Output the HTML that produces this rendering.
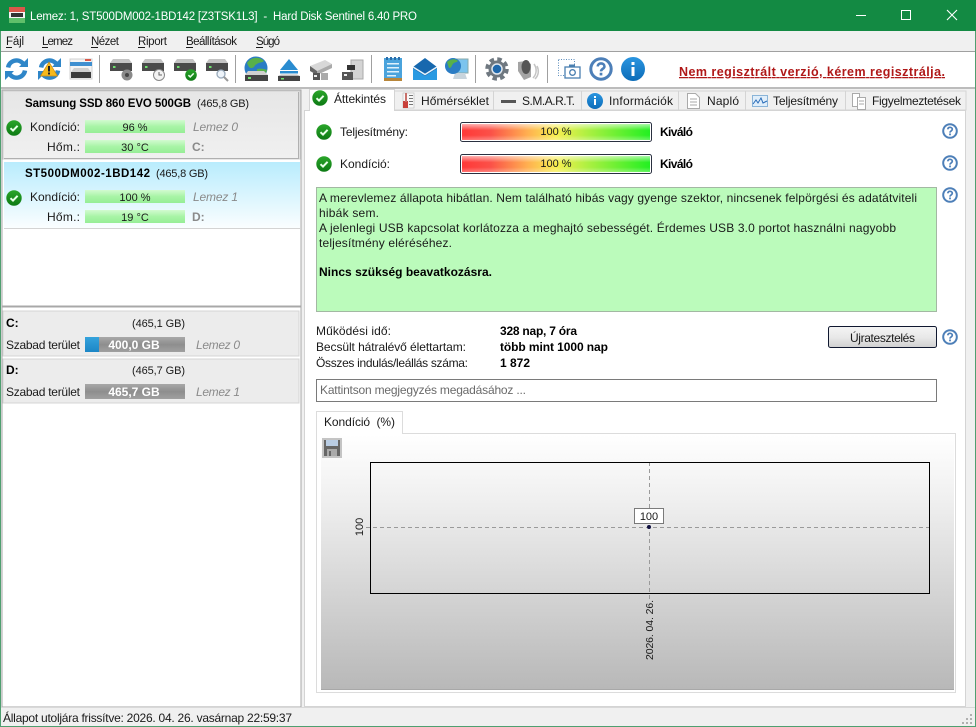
<!DOCTYPE html>
<html><head><meta charset="utf-8"><style>
html,body{margin:0;padding:0;background:#f0f0f0}
svg{display:block}
text{font-family:"Liberation Sans",sans-serif;font-size:12px;fill:#1a1a1a;white-space:pre}
.b{font-weight:700;fill:#000}
.i{font-style:italic;fill:#8a8a8a}
.g{fill:#8a8a8a;font-weight:700}
.w{fill:#fff}
.s{font-size:11px}
.m{font-size:11.5px}
</style></head><body>
<svg width="976" height="727" viewBox="0 0 976 727" xmlns="http://www.w3.org/2000/svg">
<defs>
<linearGradient id="cg" x1="0" y1="0" x2="0" y2="1"><stop offset="0" stop-color="#e6e6e6"/><stop offset="1" stop-color="#f0f0f0"/></linearGradient>
<linearGradient id="cb" x1="0" y1="0" x2="0" y2="1"><stop offset="0" stop-color="#b8ecfd"/><stop offset="1" stop-color="#fbfeff"/></linearGradient>
<linearGradient id="gb" x1="0" y1="0" x2="0" y2="1"><stop offset="0" stop-color="#d2fbd0"/><stop offset=".5" stop-color="#a8f4a6"/><stop offset="1" stop-color="#96ee96"/></linearGradient>
<linearGradient id="gr" x1="0" y1="0" x2="0" y2="1"><stop offset="0" stop-color="#a8a8a8"/><stop offset=".5" stop-color="#8e8e8e"/><stop offset="1" stop-color="#a0a0a0"/></linearGradient>
<linearGradient id="bl" x1="0" y1="0" x2="0" y2="1"><stop offset="0" stop-color="#35a3dc"/><stop offset="1" stop-color="#1c86c6"/></linearGradient>
<linearGradient id="rg" x1="0" y1="0" x2="1" y2="0"><stop offset="0" stop-color="#ff3838"/><stop offset=".15" stop-color="#fb5048"/><stop offset=".35" stop-color="#ffb050"/><stop offset=".5" stop-color="#f8ee50"/><stop offset=".68" stop-color="#a8f040"/><stop offset="1" stop-color="#22f022"/></linearGradient>
<linearGradient id="sh" x1="0" y1="0" x2="0" y2="1"><stop offset="0" stop-color="#fff" stop-opacity=".6"/><stop offset=".4" stop-color="#fff" stop-opacity="0"/><stop offset=".7" stop-color="#fff" stop-opacity="0"/><stop offset="1" stop-color="#fff" stop-opacity=".3"/></linearGradient>
<linearGradient id="btn" x1="0" y1="0" x2="0" y2="1"><stop offset="0" stop-color="#f4f4f4"/><stop offset=".5" stop-color="#e9e9e9"/><stop offset="1" stop-color="#d0d0d0"/></linearGradient>
<linearGradient id="ch" x1="0" y1="0" x2="0" y2="1"><stop offset="0" stop-color="#fff"/><stop offset=".25" stop-color="#f0f0f0"/><stop offset="1" stop-color="#b8b8b8"/></linearGradient>
<linearGradient id="chk" x1="0" y1="0" x2="0" y2="1"><stop offset="0" stop-color="#2aa52a"/><stop offset="1" stop-color="#0d7a14"/></linearGradient>
<linearGradient id="inf" x1="0" y1="0" x2="0" y2="1"><stop offset="0" stop-color="#2a95e0"/><stop offset="1" stop-color="#0c6cb8"/></linearGradient>
<symbol id="ck" viewBox="0 0 16 16" overflow="visible"><circle cx="8" cy="8" r="7.7" fill="url(#chk)"/><path d="M4.5 8.2 7 10.6 11.6 5.8" fill="none" stroke="#e8ffe8" stroke-width="2"/></symbol>
<symbol id="hp" viewBox="0 0 16 16"><circle cx="8" cy="8" r="6.800" fill="#fff" stroke="#4d7fb8" stroke-width="2"/><path d="M5.800 6.300C5.900 4.900 6.900 4.300 8 4.300c1.300 0 2.300.8 2.300 2 0 1.600-2.300 1.600-2.300 3.300" fill="none" stroke="#4d7fb8" stroke-width="1.700"/><rect x="7.100" y="10.500" width="1.800" height="1.800" fill="#4d7fb8"/></symbol>
<symbol id="hd" viewBox="0 0 22 12"><path d="M3 0H19L22 4H0Z" fill="#c4c4c4"/><rect x="0" y="4" width="22" height="8" fill="#4a4a4a"/><rect x="3" y="7" width="2.500" height="2" fill="#6fe06f"/></symbol>
</defs>

<rect width="976" height="727" fill="#f0f0f0"/>
<!-- title bar -->
<rect width="976" height="31" fill="#138a43"/>
<rect x="9" y="7" width="16" height="16" fill="#f4f4f4"/><rect x="9" y="7" width="16" height="5" fill="#d9584a"/><rect x="9" y="18" width="16" height="5" fill="#5fbf6a"/><rect x="11" y="13" width="12" height="4" fill="#333"/>
<text x="30" y="20" class="w m" textLength="387">Lemez: 1, ST500DM002-1BD142 [Z3TSK1L3]  -  Hard Disk Sentinel 6.40 PRO</text>
<rect x="856" y="15" width="10" height="1" fill="#fff"/>
<rect x="901.500" y="10.500" width="9" height="9" fill="none" stroke="#fff"/>
<path d="M947 10 957 20M957 10 947 20" stroke="#fff" stroke-width="1.100"/>
<!-- menu -->
<rect y="31" width="976" height="20" fill="#f0f0f0"/>
<text x="6" y="45" class="m" textLength="18">Fájl</text><rect x="6" y="47" width="6" height="1" fill="#1a1a1a"/>
<text x="42" y="45" class="m" textLength="31">Lemez</text><rect x="42" y="47" width="6" height="1" fill="#1a1a1a"/>
<text x="91" y="45" class="m" textLength="28">Nézet</text><rect x="91" y="47" width="7" height="1" fill="#1a1a1a"/>
<text x="138" y="45" class="m" textLength="29">Riport</text><rect x="138" y="47" width="7" height="1" fill="#1a1a1a"/>
<text x="186" y="45" class="m" textLength="51">Beállítások</text><rect x="186" y="47" width="7" height="1" fill="#1a1a1a"/>
<text x="256" y="45" class="m" textLength="24">Súgó</text><rect x="256" y="47" width="7" height="1" fill="#1a1a1a"/>
<rect y="51" width="976" height="1" fill="#a0a0a0"/>
<!-- toolbar -->
<rect y="52" width="976" height="35" fill="#fff"/>
<rect y="87" width="976" height="2" fill="#bcbcbc"/>
<g fill="#a0a0a0"><rect x="99" y="55" width="1" height="28"/><rect x="235" y="55" width="1" height="28"/><rect x="371" y="55" width="1" height="28"/><rect x="475" y="55" width="1" height="28"/><rect x="547" y="55" width="1" height="28"/></g>
<!-- refresh -->
<g id="rf"><path d="M8.100 67.500A8.500 8.500 0 0 1 23 63.500M25 70.500A8.500 8.500 0 0 1 10 74.500" fill="none" stroke="#2f86c8" stroke-width="4.500"/><path d="M28 58V67H19ZM5 80V71H14Z" fill="#2f86c8"/></g>
<g transform="translate(33 0)"><path d="M8.100 67.500A8.500 8.500 0 0 1 23 63.500M25 70.500A8.500 8.500 0 0 1 10 74.500" fill="none" stroke="#2f86c8" stroke-width="4.500"/><path d="M28 58V67H19ZM5 80V71H14Z" fill="#2f86c8"/></g>
<path d="M49 62 57.500 76H40.500Z" fill="#f6b91c" stroke="#c88a10" stroke-width=".7"/><rect x="48" y="66" width="2" height="5.500" fill="#222"/><rect x="48" y="72.500" width="2" height="2" fill="#222"/>
<!-- disk list -->
<rect x="70" y="59" width="22" height="20" fill="#f4f4f4" stroke="#d0d0d0"/><rect x="70" y="62" width="22" height="4" fill="#3f8fd0"/><rect x="85" y="59" width="6" height="2" fill="#d9584a"/><path d="M74 68H88L91 72H71Z" fill="#d0d0d0"/><rect x="71" y="72" width="20" height="6" fill="#3c3c3c"/>
<!-- hdds -->
<use href="#hd" x="110" y="59" width="22" height="12"/>
<circle cx="127" cy="75" r="5.500" fill="#8a8a8a"/><circle cx="127" cy="75" r="2" fill="#444"/>
<use href="#hd" x="142" y="59" width="22" height="12"/>
<circle cx="159" cy="75" r="5.500" fill="#f2f2f2" stroke="#888"/><path d="M159 72v3h3" stroke="#666" fill="none"/>
<use href="#hd" x="174" y="59" width="22" height="12"/>
<use href="#ck" x="185" y="69" width="12" height="12"/>
<use href="#hd" x="206" y="59" width="22" height="12"/>
<circle cx="221" cy="74" r="4" fill="#eef4fa" stroke="#9ab" stroke-width="1.300"/><path d="M224 77 228 81" stroke="#999" stroke-width="2"/>
<!-- globe hdd -->
<circle cx="256" cy="68" r="11.500" fill="#2a7cc4"/><path d="M247 63c4-6 12-7 17-2 -2 2-5 1-7 3-3 1-2 4-6 4-2 0-3-3-4-5z" fill="#58b04a"/><path d="M257 69c4-1 8 0 10 1l-2 6-8 0z" fill="#58b04a"/>
<path d="M248 71H264L268 75H245Z" fill="#d0d0d0"/><rect x="245" y="75" width="23" height="6" fill="#444"/><rect x="248" y="77" width="3" height="2" fill="#6fe06f"/>
<!-- eject -->
<path d="M289 59 298 70H280Z" fill="#2a8cd0"/><rect x="280" y="71" width="18" height="2.500" fill="#2a8cd0"/>
<path d="M281 74.500H297L300 76H278Z" fill="#bbb"/><rect x="278" y="76" width="22" height="5" fill="#444"/><rect x="281" y="78" width="3" height="1.500" fill="#6fe06f"/>
<!-- external -->
<path d="M310 66 325 60 332 64 317 71Z" fill="#d8d8d8"/><path d="M317 71 332 64V68L317 75Z" fill="#aaa"/><path d="M310 66V71L317 75V71Z" fill="#666"/><rect x="313" y="73" width="7" height="7" fill="#555"/><rect x="321" y="73" width="7" height="7" fill="#aaa"/><rect x="314" y="75" width="3" height="2" fill="#eee"/>
<rect x="351" y="60" width="12" height="19" fill="#d4d4d4" stroke="#aaa"/><rect x="347" y="65" width="8" height="5" fill="#333"/><rect x="342" y="72" width="11" height="8" fill="#555"/><rect x="344" y="74" width="3" height="2" fill="#eee"/>
<!-- notepad -->
<rect x="384" y="58" width="18" height="22" fill="#4aa3dc"/><rect x="384" y="78" width="18" height="3" fill="#b8863a"/><g fill="#2a6ca8"><rect x="386" y="57" width="2" height="3"/><rect x="390" y="57" width="2" height="3"/><rect x="394" y="57" width="2" height="3"/><rect x="398" y="57" width="2" height="3"/></g><g fill="#dff1fb"><rect x="387" y="63" width="12" height="1.500"/><rect x="387" y="67" width="12" height="1.500"/><rect x="387" y="71" width="12" height="1.500"/><rect x="387" y="75" width="9" height="1.500"/></g>
<!-- mail -->
<path d="M413 67 425 58 437 67V80H413Z" fill="#1768ae"/><path d="M413 68.500 425 76 437 68.500V80H413Z" fill="#2a9ae2"/><path d="M413 67 425 74.500 437 67" fill="none" stroke="#e8f4fc" stroke-width="1.500"/>
<!-- network -->
<rect x="452" y="59" width="16" height="14" fill="#7cc4ee" stroke="#8aa"/><path d="M455 73h10l2 6h-14z" fill="#c8d4dc"/><circle cx="453" cy="66" r="8" fill="#2a7cc4"/><path d="M447 62c3-3 8-4 11-1-2 2-4 1-5 3-2 2-1 4-4 4z" fill="#58b04a"/>
<!-- gear -->
<circle cx="497" cy="69" r="8.500" fill="#6f7880"/><circle cx="497" cy="69" r="10" fill="none" stroke="#6f7880" stroke-width="3.500" stroke-dasharray="4.500 3.350"/><circle cx="497" cy="69" r="5" fill="#1f68ac" stroke="#dfe6ee" stroke-width="1.500"/>
<!-- speaker -->
<path d="M518 62l8-1 5 3 0 13-7 3-6-9z" fill="#a4a4a4"/><ellipse cx="526" cy="67" rx="4.500" ry="7" fill="#555"/><path d="M534 64c3 4 3 10-1 14M537 66c2 4 2 9-2 13" fill="none" stroke="#c4c4c4" stroke-width="1.500"/>
<!-- camera -->
<rect x="558.500" y="59.500" width="16" height="16" fill="none" stroke="#5d8ebc" stroke-dasharray="1 1.500"/>
<rect x="565" y="67" width="15" height="11" fill="#fff" stroke="#4a7fb0" stroke-width="1.300"/><rect x="569" y="64.500" width="6" height="2.500" fill="#4a7fb0"/><circle cx="572.500" cy="72.500" r="2.800" fill="none" stroke="#4a7fb0" stroke-width="1.300"/>
<!-- help info -->
<use href="#hp" x="589" y="57" width="24" height="24"/>
<circle cx="633" cy="69" r="12" fill="url(#inf)"/><rect x="631.500" y="67" width="3" height="9" fill="#fff"/><rect x="631.500" y="62" width="3" height="3" fill="#fff"/>
<text x="679" y="76" class="b" style="fill:#b01818;text-decoration:underline;font-size:12.500px" textLength="266">Nem regisztrált verzió, kérem regisztrálja.</text>

<!-- left panel -->
<rect x="2" y="90" width="299" height="216" fill="#fff" stroke="#a8a8a8"/>
<rect x="3" y="91" width="297" height="68" fill="url(#cg)" stroke="#d0d0d0"/>
<rect x="298" y="92" width="1" height="67" fill="#b0b0b0"/><rect x="4" y="158" width="295" height="1" fill="#b0b0b0"/>
<rect x="4" y="162" width="296" height="67" fill="url(#cb)"/><rect x="4" y="228" width="296" height="1" fill="#d4d4d4"/>
<text x="25" y="107" class="b m" textLength="166">Samsung SSD 860 EVO 500GB</text>
<text x="197" y="107" class="s" textLength="52">(465,8 GB)</text>
<use href="#ck" x="6" y="120" width="16" height="16"/>
<text x="30" y="131" textLength="50">Kondíció:</text>
<rect x="85" y="120" width="100" height="13" fill="url(#gb)"/>
<text x="135" y="131" text-anchor="middle" class="s">96 %</text>
<text x="193" y="131" class="i" textLength="45">Lemez 0</text>
<text x="47" y="151" textLength="33">Hőm.:</text>
<rect x="85" y="140" width="100" height="13" fill="url(#gb)"/>
<text x="135" y="151" text-anchor="middle" class="s">30 °C</text>
<text x="192" y="151" class="g">C:</text>

<text x="25" y="177" class="b m" textLength="125">ST500DM002-1BD142</text>
<text x="156" y="177" class="s" textLength="52">(465,8 GB)</text>
<use href="#ck" x="6" y="190" width="16" height="16"/>
<text x="30" y="201" textLength="50">Kondíció:</text>
<rect x="85" y="190" width="100" height="13" fill="url(#gb)"/>
<text x="135" y="201" text-anchor="middle" class="s">100 %</text>
<text x="193" y="201" class="i" textLength="45">Lemez 1</text>
<text x="47" y="221" textLength="33">Hőm.:</text>
<rect x="85" y="210" width="100" height="13" fill="url(#gb)"/>
<text x="135" y="221" text-anchor="middle" class="s">19 °C</text>
<text x="192" y="221" class="g">D:</text>

<rect x="2" y="307" width="299" height="400" fill="#fff" stroke="#a8a8a8"/>
<rect x="3" y="311" width="296" height="45" fill="#ececec" stroke="#d4d4d4"/>
<rect x="3" y="359" width="296" height="44" fill="#ececec" stroke="#d4d4d4"/>
<text x="6" y="327" class="b">C:</text>
<text x="132" y="327" class="s" textLength="53">(465,1 GB)</text>
<text x="6" y="349" textLength="74">Szabad terület</text>
<rect x="85" y="337" width="100" height="15" fill="url(#gr)"/><rect x="85" y="337" width="14" height="15" fill="url(#bl)"/>
<text x="134" y="349" text-anchor="middle" class="b w" style="fill:#fff">400,0 GB</text>
<text x="196" y="349" class="i" textLength="44">Lemez 0</text>
<text x="6" y="374" class="b">D:</text>
<text x="132" y="374" class="s" textLength="53">(465,7 GB)</text>
<text x="6" y="396" textLength="74">Szabad terület</text>
<rect x="85" y="384" width="100" height="15" fill="url(#gr)"/>
<text x="134" y="396" text-anchor="middle" class="b w" style="fill:#fff">465,7 GB</text>
<text x="196" y="396" class="i" textLength="44">Lemez 1</text>

<!-- right panel -->
<rect x="304.500" y="110.500" width="661" height="596" fill="#fff" stroke="#d4d4d4"/>
<rect x="393" y="91" width="573" height="19" fill="#f0f0f0" stroke="#d4d4d4"/>
<g fill="#d4d4d4"><rect x="493" y="91" width="1" height="19"/><rect x="581" y="91" width="1" height="19"/><rect x="678" y="91" width="1" height="19"/><rect x="745" y="91" width="1" height="19"/><rect x="845" y="91" width="1" height="19"/></g>
<path d="M309.500 111V89.500H394.500V111" fill="#fff" stroke="#d4d4d4"/><rect x="310" y="109" width="84" height="3" fill="#fff"/>
<use href="#ck" x="312" y="90" width="16" height="16"/>
<text x="334" y="103" textLength="52">Áttekintés</text>
<rect x="403" y="93" width="11" height="15" fill="#f8f8f8" stroke="#bbb" stroke-width=".6"/><rect x="403" y="101" width="5" height="7" fill="#c8403a"/><rect x="405" y="93" width="2" height="9" fill="#c8706a"/><g fill="#777"><rect x="409" y="95" width="4" height="1"/><rect x="409" y="98" width="4" height="1"/><rect x="409" y="101" width="4" height="1"/><rect x="409" y="104" width="4" height="1"/></g>
<text x="421" y="105" textLength="68">Hőmérséklet</text>
<rect x="501" y="100" width="15" height="3" fill="#555"/>
<text x="522" y="105" textLength="53">S.M.A.R.T.</text>
<circle cx="595" cy="101" r="8" fill="url(#inf)"/><rect x="594" y="99" width="2" height="6" fill="#fff"/><rect x="594" y="96" width="2" height="2" fill="#fff"/>
<text x="609" y="105" textLength="64">Információk</text>
<path d="M687.500 93.500H695.500L699.500 97.500V108.500H687.500Z" fill="#fff" stroke="#aaa"/><path d="M690 99h7M690 102h7M690 105h7" stroke="#aaa"/>
<text x="707" y="105" textLength="32">Napló</text>
<rect x="752.500" y="95.500" width="15" height="11" fill="#e0eefa" stroke="#8ab4d8"/><path d="M753 104 756 100 758 103 761 98 763 103 767 101" fill="none" stroke="#2a6cb8"/>
<text x="773" y="105" textLength="65">Teljesítmény</text>
<path d="M852.500 93.500H859.500V106.500H852.500Z" fill="#fff" stroke="#aaa"/><path d="M857.500 97.500H865.500V109.500H857.500Z" fill="#fff" stroke="#aaa"/><path d="M859 101h5M859 104h5" stroke="#aaa"/>
<text x="872" y="105" textLength="89">Figyelmeztetések</text>

<use href="#ck" x="316" y="124" width="16" height="16"/>
<use href="#ck" x="316" y="156" width="16" height="16"/>
<text x="340" y="136" textLength="68">Teljesítmény:</text>
<text x="340" y="168" textLength="50">Kondíció:</text>
<rect x="460.500" y="122.500" width="191" height="19" rx="2" fill="#fff" stroke="#2a3040"/>
<rect x="462" y="124" width="188" height="16" fill="url(#rg)"/><rect x="462" y="124" width="188" height="16" fill="url(#sh)"/>
<rect x="460.500" y="154.500" width="191" height="19" rx="2" fill="#fff" stroke="#2a3040"/>
<rect x="462" y="156" width="188" height="16" fill="url(#rg)"/><rect x="462" y="156" width="188" height="16" fill="url(#sh)"/>
<text x="556" y="135" text-anchor="middle" class="s">100 %</text>
<text x="556" y="167" text-anchor="middle" class="s">100 %</text>
<text x="660" y="136" class="b" textLength="33">Kiváló</text>
<text x="660" y="168" class="b" textLength="33">Kiváló</text>
<use href="#hp" x="942" y="123" width="16" height="16"/>
<use href="#hp" x="942" y="155" width="16" height="16"/>
<use href="#hp" x="942" y="187" width="16" height="16"/>
<use href="#hp" x="942" y="329" width="16" height="16"/>

<rect x="316.500" y="187.500" width="620" height="124" fill="#bbfbbb" stroke="#a3b8a3"/>
<text x="319" y="202" textLength="598">A merevlemez állapota hibátlan. Nem található hibás vagy gyenge szektor, nincsenek felpörgési és adatátviteli</text>
<text x="319" y="217" textLength="60">hibák sem.</text>
<text x="319" y="232" textLength="577">A jelenlegi USB kapcsolat korlátozza a meghajtó sebességét. Érdemes USB 3.0 portot használni nagyobb</text>
<text x="319" y="247" textLength="133">teljesítmény eléréséhez.</text>
<text x="319" y="276" class="b" textLength="173">Nincs szükség beavatkozásra.</text>

<text x="316" y="335" textLength="75">Működési idő:</text>
<text x="316" y="351" textLength="150">Becsült hátralévő élettartam:</text>
<text x="316" y="367" textLength="152">Összes indulás/leállás száma:</text>
<text x="500" y="335" class="b" textLength="77">328 nap, 7 óra</text>
<text x="500" y="351" class="b" textLength="108">több mint 1000 nap</text>
<text x="500" y="367" class="b" textLength="30">1 872</text>
<rect x="828.500" y="326.500" width="108" height="21" rx="2" fill="url(#btn)" stroke="#101830"/>
<text x="850" y="342" textLength="65">Újratesztelés</text>
<rect x="316.500" y="379.500" width="620" height="22" fill="#fff" stroke="#7a7a7a"/>
<text x="320" y="394" style="fill:#6a6a6a" textLength="206">Kattintson megjegyzés megadásához ...</text>

<!-- chart -->
<rect x="316.500" y="433.500" width="639" height="259" fill="#fff" stroke="#dcdcdc"/>
<path d="M316.500 434V411.500H402.500V434" fill="#fff" stroke="#dcdcdc"/><rect x="317" y="432" width="85" height="3" fill="#fff"/>
<text x="324" y="426" textLength="71">Kondíció  (%)</text>
<rect x="321" y="435" width="633" height="254" fill="url(#ch)"/>
<rect x="321" y="689" width="633" height="1" fill="#a8a8a8"/>
<rect x="322" y="438" width="20" height="20" fill="#c4c4c4"/><rect x="324" y="440" width="16" height="16" fill="#666"/><rect x="326" y="440" width="12" height="6" fill="#b9cde4"/><rect x="327" y="449" width="10" height="7" fill="#aaa"/><rect x="329" y="451" width="2" height="5" fill="#666"/>
<path d="M366 527.500H929M649.500 462V601" stroke="#9a9a9a" stroke-dasharray="4 3" fill="none"/>
<rect x="370.500" y="462.500" width="559" height="131" fill="none" stroke="#000"/>
<circle cx="649" cy="527" r="2" fill="#101040"/>
<rect x="634.500" y="508.500" width="29" height="15" fill="#fff" stroke="#000" stroke-dasharray="1 1"/>
<text x="649" y="520" text-anchor="middle" class="s">100</text>
<text transform="translate(363 527) rotate(-90)" text-anchor="middle" class="s">100</text>
<text transform="translate(653 660) rotate(-90)" textLength="60" style="font-size:10.500px">2026. 04. 26.</text>

<!-- status -->
<rect y="707" width="976" height="18" fill="#f0f0f0"/>
<rect x="0" y="707" width="976" height="1" fill="#d8d8d8"/>
<text x="3" y="722" textLength="289">Állapot utoljára frissítve: 2026. 04. 26. vasárnap 22:59:37</text>
<g fill="#b0b0b0"><rect x="970" y="714" width="2" height="2"/><rect x="970" y="718" width="2" height="2"/><rect x="970" y="722" width="2" height="2"/><rect x="966" y="718" width="2" height="2"/><rect x="966" y="722" width="2" height="2"/><rect x="962" y="722" width="2" height="2"/></g>
<!-- window frame -->
<rect x="0" y="31" width="1" height="696" fill="#4f9f70"/><rect x="975" y="31" width="1" height="696" fill="#4f9f70"/><rect x="0" y="726" width="976" height="1" fill="#4f9f70"/>
</svg>
</body></html>
